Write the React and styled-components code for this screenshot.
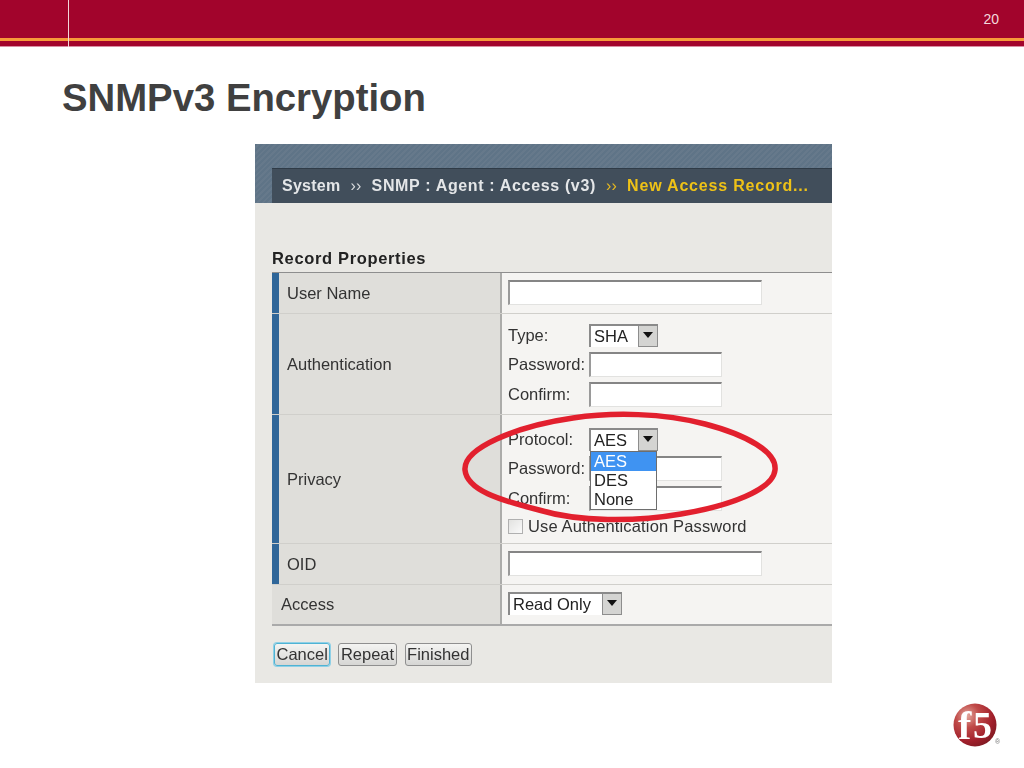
import React from "react";
import styled, { createGlobalStyle } from "styled-components";

const GlobalStyle = createGlobalStyle`
  html, body {
    margin: 0;
    padding: 0;
    background: #fff;
  }
  body {
    font-family: "Liberation Sans", Arial, sans-serif;
  }
`;

function Dropdown({ value, width, children }) {
  return (
    <SelectBox $width={width}>
      <SelectValue>{value}</SelectValue>
      <SelectArrow />
      {children}
    </SelectBox>
  );
}

function Logo() {
  return (
    <LogoSvg width="52" height="50" viewBox="0 0 52 50">
      <defs>
        <radialGradient id="ball" cx="32%" cy="28%" r="80%">
          <stop offset="0%" stopColor="#e3a79d" />
          <stop offset="35%" stopColor="#c04a48" />
          <stop offset="75%" stopColor="#a11f2b" />
          <stop offset="100%" stopColor="#7d1a22" />
        </radialGradient>
      </defs>
      <circle cx="24" cy="23" r="21.5" fill="url(#ball)" />
      <text x="7" y="37" fontFamily="Liberation Serif" fontWeight="700" fontSize="40" fill="#fff">
        f
      </text>
      <text x="22" y="36" fontFamily="Liberation Serif" fontWeight="700" fontSize="38" fill="#fff">
        5
      </text>
      <text x="44" y="42" fontFamily="Liberation Sans" fontSize="7" fill="#777">
        ®
      </text>
    </LogoSvg>
  );
}

export default function App() {
  return (
    <Slide>
      <GlobalStyle />
      <TopBar>
        <BarMain>
          <PageNumber>20</PageNumber>
        </BarMain>
        <OrangeLine />
        <BarLower />
        <BarDivider />
      </TopBar>
      <Title>SNMPv3 Encryption</Title>
      <Panel>
        <PanelHead>
          <Crumbs>
            <span>System</span>
            <CrumbSep>››</CrumbSep>
            <CrumbPath>SNMP : Agent : Access (v3)</CrumbPath>
            <CrumbSep $current>››</CrumbSep>
            <CrumbCurrent>New Access Record...</CrumbCurrent>
          </Crumbs>
        </PanelHead>
        <FormArea>
          <SectionTitle>Record Properties</SectionTitle>
          <Table>
            <Row $height={41}>
              <LabelCell $marked>User Name</LabelCell>
              <ValueCell $top={7}>
                <TextInput $width={254} />
              </ValueCell>
            </Row>
            <Row $height={101}>
              <LabelCell $marked>Authentication</LabelCell>
              <ValueCell $top={10}>
                <Field>
                  <FieldLabel>Type:</FieldLabel>
                  <Dropdown value="SHA" />
                </Field>
                <Field>
                  <FieldLabel>Password:</FieldLabel>
                  <TextInput $width={133} />
                </Field>
                <Field>
                  <FieldLabel>Confirm:</FieldLabel>
                  <TextInput $width={133} />
                </Field>
              </ValueCell>
            </Row>
            <Row $height={129}>
              <LabelCell $marked>Privacy</LabelCell>
              <ValueCell $top={13}>
                <Field>
                  <FieldLabel>Protocol:</FieldLabel>
                  <Dropdown value="AES">
                    <OptionList>
                      <Option $selected>AES</Option>
                      <Option>DES</Option>
                      <Option>None</Option>
                    </OptionList>
                  </Dropdown>
                </Field>
                <Field>
                  <FieldLabel>Password:</FieldLabel>
                  <TextInput $width={133} />
                </Field>
                <Field>
                  <FieldLabel>Confirm:</FieldLabel>
                  <TextInput $width={133} />
                </Field>
                <CheckRow>
                  <CheckBox />
                  <span>Use Authentication Password</span>
                </CheckRow>
              </ValueCell>
            </Row>
            <Row $height={41}>
              <LabelCell $marked>OID</LabelCell>
              <ValueCell $top={7}>
                <TextInput $width={254} />
              </ValueCell>
            </Row>
            <Row $height={41} $last>
              <LabelCell>Access</LabelCell>
              <ValueCell $top={7}>
                <Dropdown value="Read Only" width={114} />
              </ValueCell>
            </Row>
          </Table>
          <Buttons>
            <ActionButton $focused>Cancel</ActionButton>
            <ActionButton>Repeat</ActionButton>
            <ActionButton>Finished</ActionButton>
          </Buttons>
        </FormArea>
        <Highlight width="332" height="124" viewBox="0 0 332 124">
          <path
            d="M10 66 C8 44 62 22 118 14 C158 8 208 9 250 20 C292 31 322 48 320 66 C318 86 274 102 226 110 C180 118 124 118 84 106 C44 96 12 86 10 66 Z"
            fill="none"
            stroke="#e2202e"
            strokeWidth="5.5"
          />
        </Highlight>
      </Panel>
      <Footer>
        <Logo />
      </Footer>
    </Slide>
  );
}

const Slide = styled.div`
  width: 1024px;
  height: 768px;
  overflow: hidden;
  background: #fff;
`;

const TopBar = styled.header`
  position: relative;
  height: 46px;
  background: #a2042c;
  border-bottom: 1px solid #d98ea3;
  display: flex;
  flex-direction: column;
`;

const BarMain = styled.div`
  height: 38px;
  display: flex;
  justify-content: flex-end;
  align-items: center;
  padding-right: 25px;
`;

const PageNumber = styled.span`
  color: #f4d9dc;
  font-size: 14px;
`;

const OrangeLine = styled.div`
  height: 3px;
  background: #f79a3a;
`;

const BarLower = styled.div`
  flex: 1;
`;

const BarDivider = styled.div`
  position: absolute;
  left: 68px;
  top: 0;
  bottom: -1px;
  width: 1px;
  background: #f3d6da;
`;

const Title = styled.h1`
  margin: 27px 0 0 62px;
  height: 70px;
  font-size: 38.3px;
  line-height: 47px;
  font-weight: 700;
  color: #404040;
`;

const Panel = styled.section`
  position: relative;
  margin-left: 255px;
  width: 577px;
  height: 539px;
  background: #e9e8e4;
  color: #333;
  font-size: 16.5px;
  filter: blur(0.35px);
`;

const PanelHead = styled.div`
  height: 59px;
  box-sizing: border-box;
  padding: 24px 0 0 17px;
  background: repeating-linear-gradient(135deg, #5f7487 0 2px, #66798b 2px 4px);
`;

const Crumbs = styled.div`
  height: 35px;
  box-sizing: border-box;
  padding-left: 10px;
  display: flex;
  align-items: center;
  background: #414e5b;
  border-top: 1px solid #2f3b47;
  color: #e4e6e8;
  font-weight: 700;
  font-size: 16px;
  letter-spacing: 0.25px;
`;

const CrumbSep = styled.span`
  margin: 0 10px;
  font-weight: 400;
  color: ${(p) => (p.$current ? "#e6b820" : "#d6d9dc")};
`;

const CrumbPath = styled.span`
  letter-spacing: 0.65px;
`;

const CrumbCurrent = styled.span`
  color: #eec217;
  letter-spacing: 0.8px;
`;

const FormArea = styled.div`
  padding: 45px 0 0 17px;
`;

const SectionTitle = styled.h2`
  margin: 0;
  height: 24px;
  font-size: 16.5px;
  line-height: 20px;
  font-weight: 700;
  letter-spacing: 0.65px;
  color: #222;
`;

const Table = styled.div`
  border-top: 1px solid #8e8e8e;
`;

const Row = styled.div`
  display: grid;
  grid-template-columns: 230px 1fr;
  box-sizing: border-box;
  height: ${(p) => p.$height}px;
  border-bottom: ${(p) => (p.$last ? "2px solid #aaa" : "1px solid #d0cfcb")};
`;

const LabelCell = styled.div`
  display: flex;
  align-items: center;
  box-sizing: border-box;
  padding-left: ${(p) => (p.$marked ? "8px" : "9px")};
  background: #dfdeda;
  border-left: ${(p) => (p.$marked ? "7px solid #2f6699" : "0")};
  border-right: 2px solid #acacaa;
  color: #333;
`;

const ValueCell = styled.div`
  display: flex;
  flex-direction: column;
  align-items: flex-start;
  gap: 5px;
  box-sizing: border-box;
  padding: ${(p) => p.$top}px 0 0 6px;
  background: #f5f4f2;
`;

const Field = styled.div`
  display: flex;
  align-items: center;
`;

const FieldLabel = styled.label`
  width: 81px;
  color: #333;
`;

const TextInput = styled.div`
  box-sizing: border-box;
  width: ${(p) => p.$width}px;
  height: 25px;
  background: #fff;
  border-top: 2px solid #858585;
  border-left: 2px solid #9a9a9a;
  border-right: 1px solid #e2e2e0;
  border-bottom: 1px solid #e2e2e0;
`;

const SelectBox = styled.div`
  position: relative;
  box-sizing: border-box;
  width: ${(p) => p.$width || 69}px;
  height: 23px;
  display: flex;
  justify-content: space-between;
  background: #fff;
  border-top: 2px solid #8a8a8a;
  border-left: 2px solid #8a8a8a;
`;

const SelectValue = styled.span`
  padding-left: 3px;
  line-height: 21px;
  color: #222;
`;

const SelectArrow = styled.span`
  position: relative;
  box-sizing: border-box;
  width: 20px;
  height: 21px;
  background: #d4d4d2;
  border: 1px solid #8d8d8d;
  border-top: 0;
  &::after {
    content: "";
    position: absolute;
    left: 4px;
    top: 6px;
    border-left: 5px solid transparent;
    border-right: 5px solid transparent;
    border-top: 6px solid #111;
  }
`;

const OptionList = styled.div`
  position: absolute;
  left: -1px;
  top: 21px;
  width: 67px;
  box-sizing: border-box;
  height: 59px;
  background: #fff;
  border: 1px solid #6e6e6e;
  z-index: 1;
`;

const Option = styled.div`
  height: 19px;
  line-height: 19px;
  padding-left: 3px;
  background: ${(p) => (p.$selected ? "#3f93f2" : "transparent")};
  color: ${(p) => (p.$selected ? "#fff" : "#222")};
`;

const CheckRow = styled.div`
  display: flex;
  align-items: center;
  gap: 5px;
  margin-top: 2px;
  height: 16px;
  letter-spacing: 0.15px;
  color: #333;
`;

const CheckBox = styled.span`
  box-sizing: border-box;
  width: 15px;
  height: 15px;
  background: linear-gradient(135deg, #e2e2e0, #fafafa);
  border: 1px solid #b0b0b0;
`;

const Buttons = styled.div`
  display: flex;
  gap: 8px;
  margin: 17px 0 0 2px;
`;

const ActionButton = styled.button`
  height: 23px;
  padding: 0 1.5px;
  font-family: inherit;
  font-size: 16.5px;
  line-height: 19px;
  color: #333;
  border-radius: 3px;
  border: 1px solid ${(p) => (p.$focused ? "#4fb3d4" : "#8f8f8f")};
  box-shadow: ${(p) => (p.$focused ? "0 0 0 1px #8fd0e6" : "none")};
  background: linear-gradient(#f4f4f2, #d6d6d4);
`;

const Highlight = styled.svg`
  position: absolute;
  left: 200px;
  top: 260px;
  z-index: 2;
`;

const Footer = styled.footer`
  display: flex;
  justify-content: flex-end;
  margin-top: 19px;
  padding-right: 21px;
`;

const LogoSvg = styled.svg`
  filter: blur(0.4px);
`;
